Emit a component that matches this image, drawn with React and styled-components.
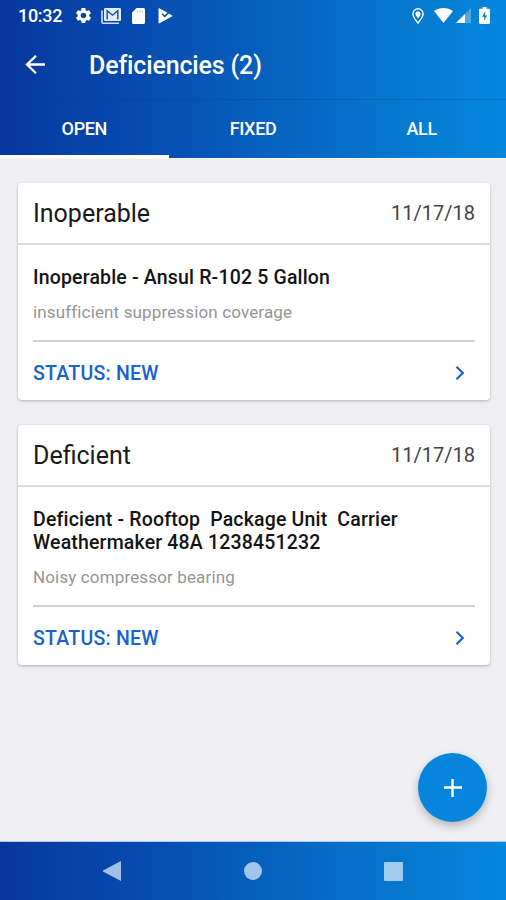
import styled, { createGlobalStyle } from 'styled-components';
import { MdSettings } from 'react-icons/md';

const GlobalStyle = createGlobalStyle`
    * {
        box-sizing: border-box;
    }
    body {
        margin: 0;
        font-family: Roboto, sans-serif;
        background: #efeef3;
    }
    h1, h2, h3, p {
        margin: 0;
    }
    button {
        border: 0;
        padding: 0;
        background: none;
        font: inherit;
        color: inherit;
    }
    svg {
        display: block;
        flex: none;
    }
`

const blues = 'linear-gradient(90deg, #07369f 0%, #0650b1 33%, #0663c0 55%, #0578d0 80%, #0487dd 100%)';

const Screen = styled.div`
    display: flex;
    flex-direction: column;
    width: 506px;
    height: 900px;
    overflow: hidden;
    position: relative;
`
const Header = styled.header`
    height: 158px;
    flex: none;
    color: #fff;
    background: ${blues};
`
const StatusBar = styled.div`
    display: flex;
    align-items: center;
    height: 31px;
    padding: 0 16px 0 18px;
`
const Clock = styled.span`
    width: 56px;
    font-size: 18px;
    font-weight: 500;
    line-height: 31px;
    letter-spacing: -0.3px;
`
const StatusIcon = styled.span`
    margin-left: ${props => props.$gap || 0}px;
`
const Spacer = styled.div`
    flex: 1;
`
const TitleBar = styled.div`
    display: flex;
    align-items: center;
    height: 68px;
    padding-left: 25px;
    h1{
        margin-left: 44px;
        padding-top: 1px;
        font-size: 25px;
        font-weight: 500;
        line-height: 30px;
        letter-spacing: -0.15px;
    }
`
const Tabs = styled.nav`
    display: flex;
    height: 59px;
    border-top: 1px solid rgba(0, 60, 120, 0.25);
`
const Tab = styled.button`
    flex: 1;
    padding-top: 2px;
    font-size: 18px;
    font-weight: 500;
    letter-spacing: -0.35px;
    border-bottom: 3px solid ${props => props.$active ? '#fff' : 'transparent'};
`
const List = styled.main`
    flex: 1;
    display: flex;
    flex-direction: column;
    gap: 25px;
    padding: 24px 16px 0 18px;
    background: #efeef3;
    border-top: 1px solid #f8f8fc;
`
const Card = styled.article`
    background: #fff;
    border-radius: 4px;
    box-shadow: 0 1px 3px rgba(0, 0, 0, 0.26);
`
const CardHeader = styled.div`
    display: flex;
    align-items: center;
    justify-content: space-between;
    height: 62px;
    padding: 0 15px;
    border-bottom: 2px solid #dcdcde;
    h2{
        padding-top: 1px;
        font-size: 25px;
        font-weight: 400;
        line-height: 30px;
        color: #1a1a1a;
    }
    span{
        padding-bottom: 1px;
        font-size: 20px;
        line-height: 24px;
        color: #444;
    }
`
const CardBody = styled.div`
    margin: 0 15px;
    padding: 21px 0 17px;
    border-bottom: 2px solid #d2d2d2;
    h3{
        font-size: 19.5px;
        font-weight: 500;
        line-height: 23px;
        letter-spacing: 0.17px;
        color: #141414;
        white-space: pre-wrap;
    }
    p{
        margin-top: 12px;
        font-size: 17px;
        line-height: 22px;
        letter-spacing: 0.14px;
        color: #959595;
    }
`
const CardFooter = styled.div`
    display: flex;
    align-items: center;
    justify-content: space-between;
    height: 58px;
    padding: 4px 25px 0 15px;
    font-size: 19.5px;
    font-weight: 500;
    letter-spacing: 0.25px;
    color: #1762d0;
`
const AddButton = styled.button`
    display: flex;
    align-items: center;
    justify-content: center;
    position: absolute;
    right: 19px;
    bottom: 78px;
    width: 69px;
    height: 69px;
    border-radius: 50%;
    background: #0785dd;
    box-shadow: 0 4px 8px rgba(0, 0, 0, 0.24);
`
const NavBar = styled.footer`
    display: flex;
    align-items: center;
    justify-content: space-between;
    height: 58px;
    flex: none;
    padding: 0 103px;
    background: ${blues};
    box-shadow: 0 -1px 0 #b9c6e4;
`

const deficiencies = [
    {
        type: 'Inoperable',
        date: '11/17/18',
        title: 'Inoperable - Ansul R-102 5 Gallon',
        note: 'insufficient suppression coverage',
    },
    {
        type: 'Deficient',
        date: '11/17/18',
        title: 'Deficient - Rooftop  Package Unit  Carrier\nWeathermaker 48A 1238451232',
        note: 'Noisy compressor bearing',
    },
];

const GmailIcon = () => (
    <svg width="20" height="16" viewBox="0 0 20 16" fill="none">
        <path d="M1 2.500v11.500c0 .8.500 1.200 1.200 1.200H18" stroke="#cfdff7" strokeWidth="1.600" />
        <rect x="3" y="0" width="17" height="13" rx="1.300" fill="#e2ecfb" />
        <path d="M6.200 11.500V2.800l5.300 4.400 5.300-4.400v8.700" stroke="#0a48ad" strokeWidth="1.400" />
    </svg>
)

const SdIcon = () => (
    <svg width="13" height="16" viewBox="0 0 13 16">
        <path fill="#fff" d="M4.600 0h6.900C12.400 0 13 .6 13 1.500v13c0 .9-.6 1.500-1.500 1.500h-10C.6 16 0 15.400 0 14.500V4.600z" />
        <path d="M5.300 2.500v2M7.800 2.500v2M10.200 2.500v2" stroke="#0a50b2" strokeWidth="1" opacity="0.35" />
    </svg>
)

const PlayIcon = () => (
    <svg width="15" height="16" viewBox="0 0 15 16" fill="none">
        <path d="M.5.800c0-.6.500-.8 1-.5L13.800 7.200c.6.300.6 1 0 1.300L1.500 15.300c-.5.300-1 .1-1-.5z" fill="#fff" />
        <path d="M4 5.800l2.700 2.600L12 3.400" stroke="#0a50b2" strokeWidth="1.500" />
    </svg>
)

const PinIcon = () => (
    <svg width="12" height="16" viewBox="0 0 12 16" fill="none">
        <path d="M6 15C3.500 11.800.9 8.700.9 5.900a5.100 5.100 0 0 1 10.200 0C11.100 8.700 8.500 11.800 6 15z" stroke="#fff" strokeWidth="1.400" />
        <path d="M6 3.300a2.700 2.700 0 0 1 1.500 4.900L6 10.500 4.500 8.200A2.700 2.700 0 0 1 6 3.300z" fill="#fff" />
    </svg>
)

const WifiIcon = () => (
    <svg width="19" height="15" viewBox="0 0 19 15">
        <path fill="#fff" d="M0 3C5.500-1 13.500-1 19 3L9.500 15z" />
    </svg>
)

const SignalIcon = () => (
    <svg width="15" height="15" viewBox="0 0 15 15">
        <path d="M0 15L15 0v15z" fill="#fff" opacity="0.3" />
        <path d="M0 15L9 6V15z" fill="#fff" />
    </svg>
)

const BatteryIcon = () => (
    <svg width="11" height="17" viewBox="0 0 11 17">
        <path fill="#fff" fillRule="evenodd" d="M3.500 0h4v1.800h2.300c.6 0 1.200.5 1.200 1.200v12.800c0 .7-.6 1.200-1.200 1.200H1.200C.5 17 0 16.500 0 15.800V3c0-.7.5-1.200 1.200-1.200h2.300zM6.200 4.500L3 9.700h2.200v3.700l3-5H6.200z" />
    </svg>
)

const App = () => {
    return (
        <Screen>
            <GlobalStyle />
            <Header>
                <StatusBar>
                    <Clock>10:32</Clock>
                    <StatusIcon><MdSettings size={19} /></StatusIcon>
                    <StatusIcon $gap={8}><GmailIcon /></StatusIcon>
                    <StatusIcon $gap={11}><SdIcon /></StatusIcon>
                    <StatusIcon $gap={13}><PlayIcon /></StatusIcon>
                    <Spacer />
                    <StatusIcon><PinIcon /></StatusIcon>
                    <StatusIcon $gap={10}><WifiIcon /></StatusIcon>
                    <StatusIcon $gap={3}><SignalIcon /></StatusIcon>
                    <StatusIcon $gap={8}><BatteryIcon /></StatusIcon>
                </StatusBar>
                <TitleBar>
                    <svg width="20" height="20" viewBox="0 0 20 20" fill="none" stroke="#fff" strokeWidth="2.300">
                        <path d="M20 9.500H2M11 .8L2 9.500l9 8.800" />
                    </svg>
                    <h1>Deficiencies (2)</h1>
                </TitleBar>
                <Tabs>
                    <Tab $active>OPEN</Tab>
                    <Tab>FIXED</Tab>
                    <Tab>ALL</Tab>
                </Tabs>
            </Header>

            <List>
                {deficiencies.map(item => (
                    <Card key={item.type}>
                        <CardHeader>
                            <h2>{item.type}</h2>
                            <span>{item.date}</span>
                        </CardHeader>
                        <CardBody>
                            <h3>{item.title}</h3>
                            <p>{item.note}</p>
                        </CardBody>
                        <CardFooter>
                            STATUS: NEW
                            <svg width="10" height="14" viewBox="0 0 10 14" fill="none" stroke="#1762d0" strokeWidth="2.200">
                                <path d="M1.500 .8l6.300 6.200-6.300 6.200" />
                            </svg>
                        </CardFooter>
                    </Card>
                ))}
            </List>

            <AddButton aria-label="Add deficiency">
                <svg width="18" height="18" viewBox="0 0 18 18" stroke="#fff" strokeWidth="2.500">
                    <path d="M8.500 0v18M0 8.500h18" />
                </svg>
            </AddButton>

            <NavBar>
                <svg width="18" height="20" viewBox="0 0 18 20" fill="#a3bfe6">
                    <path d="M18 0v20L0 10.500v-1z" />
                </svg>
                <svg width="18" height="18" viewBox="0 0 18 18" fill="#a3c5eb">
                    <circle cx="9" cy="9" r="9" />
                </svg>
                <svg width="19" height="19" viewBox="0 0 19 19" fill="#a3cbef">
                    <rect width="19" height="19" rx="1" />
                </svg>
            </NavBar>
        </Screen>
    );
}

export default App;
